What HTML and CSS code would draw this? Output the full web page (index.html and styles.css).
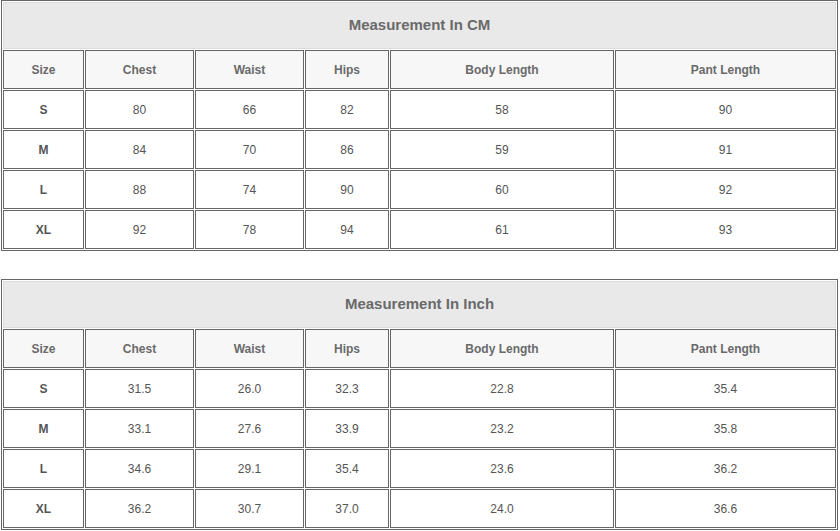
FILE: index.html
```html
<!DOCTYPE html>
<html>
<head>
<meta charset="utf-8">
<link rel="stylesheet" href="styles.css">
</head>
<body>
<div class="page">
  <div class="chart">
    <div class="title">Measurement In CM</div>
    <div class="cell head">Size</div><div class="cell head">Chest</div><div class="cell head">Waist</div><div class="cell head">Hips</div><div class="cell head">Body Length</div><div class="cell head">Pant Length</div>
    <div class="cell size">S</div><div class="cell">80</div><div class="cell">66</div><div class="cell">82</div><div class="cell">58</div><div class="cell">90</div>
    <div class="cell size">M</div><div class="cell">84</div><div class="cell">70</div><div class="cell">86</div><div class="cell">59</div><div class="cell">91</div>
    <div class="cell size">L</div><div class="cell">88</div><div class="cell">74</div><div class="cell">90</div><div class="cell">60</div><div class="cell">92</div>
    <div class="cell size">XL</div><div class="cell">92</div><div class="cell">78</div><div class="cell">94</div><div class="cell">61</div><div class="cell">93</div>
  </div>
  <div class="chart">
    <div class="title">Measurement In Inch</div>
    <div class="cell head">Size</div><div class="cell head">Chest</div><div class="cell head">Waist</div><div class="cell head">Hips</div><div class="cell head">Body Length</div><div class="cell head">Pant Length</div>
    <div class="cell size">S</div><div class="cell">31.5</div><div class="cell">26.0</div><div class="cell">32.3</div><div class="cell">22.8</div><div class="cell">35.4</div>
    <div class="cell size">M</div><div class="cell">33.1</div><div class="cell">27.6</div><div class="cell">33.9</div><div class="cell">23.2</div><div class="cell">35.8</div>
    <div class="cell size">L</div><div class="cell">34.6</div><div class="cell">29.1</div><div class="cell">35.4</div><div class="cell">23.6</div><div class="cell">36.2</div>
    <div class="cell size">XL</div><div class="cell">36.2</div><div class="cell">30.7</div><div class="cell">37.0</div><div class="cell">24.0</div><div class="cell">36.6</div>
  </div>
</div>
</body>
</html>
```

FILE: styles.css
```css
html, body {
  margin: 0;
  padding: 0;
  background: #ffffff;
}

.page {
  display: flex;
  flex-direction: column;
  gap: 28px;
  padding-left: 1px;
  font-family: "Liberation Sans", Arial, sans-serif;
}

.chart {
  display: grid;
  grid-template-columns: 81px 109px 109px 84px 224px 221px;
  grid-template-rows: 47px repeat(5, 39px);
  gap: 1px;
  padding: 1px;
  border: 1px solid #666666;
  width: max-content;
}

.title {
  grid-column: 1 / -1;
  box-sizing: border-box;
  border: 1px solid #dcdcdc;
  background: #e9e9e9;
  color: #6a6a6a;
  font-size: 15px;
  font-weight: bold;
  padding-bottom: 3px;
  display: flex;
  align-items: center;
  justify-content: center;
}

.cell {
  box-sizing: border-box;
  border: 1px solid #666666;
  background: #ffffff;
  color: #555555;
  font-size: 12px;
  display: flex;
  align-items: center;
  justify-content: center;
}

.head {
  background: #f7f7f7;
  color: #6a6a6a;
  font-weight: bold;
}

.size {
  font-weight: bold;
  color: #555555;
}
```
